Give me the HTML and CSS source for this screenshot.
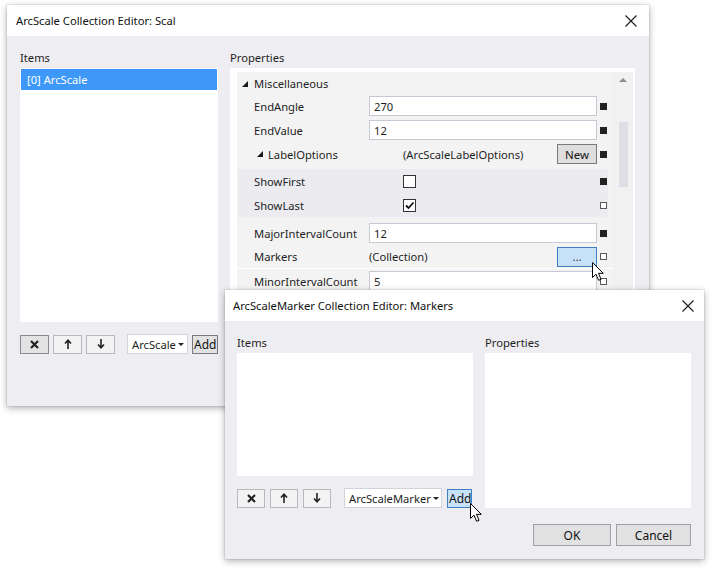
FILE: index.html
```html
<!DOCTYPE html>
<html>
<head>
<meta charset="utf-8">
<link rel="stylesheet" href="styles.css">
</head>
<body>
<div class="desk">
  <section class="win win-main">
    <header class="titlebar">
      <span class="title">ArcScale Collection Editor: Scal</span>
      <svg class="close" width="12" height="12" viewBox="0 0 12 12"><path d="M0.5 0.5 L11.5 11.5 M11.5 0.5 L0.5 11.5" stroke="#1a1a1a" stroke-width="1.1" fill="none"/></svg>
    </header>
    <div class="main-body">
      <div class="col-left">
        <div class="label">Items</div>
        <div class="list list-main"><div class="item sel">[0] ArcScale</div></div>
        <div class="toolbar">
          <button class="tb tb-pressed"><svg width="9" height="9" viewBox="0 0 9 9"><path d="M1 1 L8 8 M8 1 L1 8" stroke="#222" stroke-width="2.2"/></svg></button>
          <button class="tb"><svg width="8" height="10" viewBox="0 0 8 10"><path d="M4 10 V2 M1 4.5 L4 1.2 L7 4.5" stroke="#222" stroke-width="1.6" fill="none"/></svg></button>
          <button class="tb"><svg width="8" height="10" viewBox="0 0 8 10"><path d="M4 0 V8 M1 5.5 L4 8.8 L7 5.5" stroke="#222" stroke-width="1.6" fill="none"/></svg></button>
          <div class="combo combo-main">ArcScale<span class="caret"></span></div>
          <button class="add">Add</button>
        </div>
      </div>
      <div class="col-right">
        <div class="label">Properties</div>
        <div class="pgrid">
          <div class="pcontent">
            <div class="row cat"><span class="tri"><svg width="6" height="6" viewBox="0 0 6 6"><polygon points="6,0 6,6 0,6" fill="#1a1a1a"/></svg></span><span>Miscellaneous</span></div>
            <div class="row"><span class="name">EndAngle</span><span class="val input">270</span><span class="mark on"></span></div>
            <div class="row"><span class="name">EndValue</span><span class="val input">12</span><span class="mark on"></span></div>
            <div class="row"><span class="name wide"><span class="tri sub"><svg width="6" height="6" viewBox="0 0 6 6"><polygon points="6,0 6,6 0,6" fill="#1a1a1a"/></svg></span>LabelOptions</span><span class="val text">(ArcScaleLabelOptions)</span><button class="newbtn">New</button><span class="mark on"></span></div>
            <div class="group">
              <div class="row grow"><span class="name wide">ShowFirst</span><span class="val"><span class="chk"></span></span><span class="mark on"></span></div>
              <div class="row grow"><span class="name wide">ShowLast</span><span class="val"><span class="chk"><svg width="11" height="11" viewBox="0 0 11 11"><path d="M2 5.5 L4.5 8 L9.5 2.5" stroke="#111" stroke-width="1.8" fill="none"/></svg></span></span><span class="mark"></span></div>
            </div>
            <div class="row"><span class="name">MajorIntervalCount</span><span class="val input">12</span><span class="mark on"></span></div>
            <div class="row sep"><span class="name">Markers</span><span class="val text">(Collection)</span><button class="dots">...</button><span class="mark"></span></div>
            <div class="row"><span class="name">MinorIntervalCount</span><span class="val input">5</span><span class="mark"></span></div>
          </div>
          <div class="vscroll">
            <span class="up"></span>
            <span class="thumb"></span>
          </div>
        </div>
      </div>
    </div>
  </section>

  <svg class="cursor cursor-1" width="13" height="20" viewBox="0 0 13 20"><path d="M0.5 0.5 L0.5 15.5 L4 12.2 L6.6 18.3 L9 17.3 L6.5 11.3 L11.3 11.3 Z" fill="#fff" stroke="#000" stroke-width="1"/></svg>

  <section class="win win-sub">
    <header class="titlebar">
      <span class="title">ArcScaleMarker Collection Editor: Markers</span>
      <svg class="close" width="12" height="12" viewBox="0 0 12 12"><path d="M0.5 0.5 L11.5 11.5 M11.5 0.5 L0.5 11.5" stroke="#1a1a1a" stroke-width="1.1" fill="none"/></svg>
    </header>
    <div class="sub-body">
      <div class="col-left2">
        <div class="label">Items</div>
        <div class="list list-sub"></div>
        <div class="toolbar toolbar2">
          <button class="tb tb2"><svg width="9" height="9" viewBox="0 0 9 9"><path d="M1 1 L8 8 M8 1 L1 8" stroke="#222" stroke-width="2.2"/></svg></button>
          <button class="tb tb2"><svg width="8" height="10" viewBox="0 0 8 10"><path d="M4 10 V2 M1 4.5 L4 1.2 L7 4.5" stroke="#222" stroke-width="1.6" fill="none"/></svg></button>
          <button class="tb tb2"><svg width="8" height="10" viewBox="0 0 8 10"><path d="M4 0 V8 M1 5.5 L4 8.8 L7 5.5" stroke="#222" stroke-width="1.6" fill="none"/></svg></button>
          <div class="combo combo-sub">ArcScaleMarker<span class="caret"></span></div>
          <button class="add add-hot">Add</button>
        </div>
      </div>
      <div class="col-right2">
        <div class="label">Properties</div>
        <div class="list list-props"></div>
      </div>
      <div class="footer">
        <button class="dlg ok">OK</button>
        <button class="dlg cancel">Cancel</button>
      </div>
    </div>
  </section>

  <svg class="cursor cursor-2" width="13" height="20" viewBox="0 0 13 20"><path d="M0.5 0.5 L0.5 15.5 L4 12.2 L6.6 18.3 L9 17.3 L6.5 11.3 L11.3 11.3 Z" fill="#fff" stroke="#000" stroke-width="1"/></svg>
</div>
</body>
</html>
```

FILE: styles.css
```css
* { box-sizing: border-box; }
html, body { margin: 0; padding: 0; background: #ffffff; }
body {
  font-family: "Noto Sans", "Segoe UI", "Liberation Sans", sans-serif;
  font-size: 11.2px;
  color: #1e1e1e;
}
.desk { position: relative; width: 717px; height: 574px; overflow: hidden; }

.win {
  position: absolute;
  background: #eeedf2;
  box-shadow: 0 0 0 1px rgba(0,0,0,0.06), 0 2px 7px rgba(0,0,0,0.32);
  display: flex;
  flex-direction: column;
}
.win-main { left: 7px; top: 5px; width: 642px; height: 401px; }
.win-sub { left: 225px; top: 290px; width: 479px; height: 269px; }

.titlebar {
  height: 31px;
  background: #ffffff;
  display: flex;
  align-items: center;
  justify-content: space-between;
  padding: 0 12px 0 9px;
  flex: none;
}
.win-sub .titlebar { padding: 0 10px 0 8px; }
.title { font-size: 11.2px; color: #111; line-height: 16px; }

.main-body {
  display: flex;
  gap: 12px;
  padding: 12px 14px 0 13px;
}
.col-left { width: 198px; display: flex; flex-direction: column; }
.col-right { width: 405px; display: flex; flex-direction: column; }

.label { height: 20px; line-height: 20px; color: #1e1e1e; }

.list { background: #ffffff; }
.list-main { height: 254px; padding: 1px; }
.item { height: 21px; line-height: 22px; padding-left: 6px; }
.item.sel { background: #3d98f8; color: #ffffff; }

.toolbar { display: flex; align-items: center; margin-top: 12px; height: 20px; }
.tb {
  width: 29px; height: 19px;
  border: 1px solid #b9b9b9;
  background: #f3f3f3;
  padding: 0; margin: 0 4px 0 0;
  display: flex; align-items: center; justify-content: center;
}
.tb-pressed { background: #e3e3e3; border-color: #8a8a8a; }
.combo {
  height: 20px;
  background: #ffffff;
  border: 1px solid #d3d3dc;
  display: flex; align-items: center;
  padding-left: 4px;
  color: #1e1e1e;
  white-space: nowrap;
  overflow: hidden;
}
.combo-main { width: 61px; margin-left: 8px; }
.caret {
  width: 0; height: 0;
  border-left: 3px solid transparent;
  border-right: 3px solid transparent;
  border-top: 3px solid #222;
  margin-left: 2px;
  flex: none;
}
.add {
  height: 19px; width: 26px;
  margin-left: 4px;
  padding: 0;
  border: 1px solid #7a7a7a;
  background: #e1e1e1;
  font-family: inherit; font-size: 12px; color: #111;
  overflow: hidden;
  white-space: nowrap;
  text-align: left;
  padding-left: 1px;
}

.pgrid {
  background: #ffffff;
  height: 254px;
  display: flex;
  padding: 4px 2px 0 7px;
}
.pcontent {
  width: 376px;
  background: #f3f3f3;
  display: flex;
  flex-direction: column;
}
.vscroll {
  width: 20px;
  background: #f1f1f2;
  display: flex;
  flex-direction: column;
  align-items: center;
}
.vscroll .up {
  margin-top: 6px;
  width: 0; height: 0;
  border-left: 4px solid transparent;
  border-right: 4px solid transparent;
  border-bottom: 4px solid #8c8c96;
}
.vscroll .thumb {
  margin-top: 40px;
  width: 9px; height: 65px;
  background: #dedee6;
}

.row {
  height: 24px;
  display: flex;
  align-items: center;
  padding: 0 6px 0 17px;
  flex: none;
}
.row.cat { padding-left: 5px; height: 22px; padding-top: 1px; }
.tri { width: 12px; display: inline-flex; align-items: center; }
.tri.sub { width: 14px; padding-left: 3px; }
.name { width: 115px; flex: none; white-space: nowrap; display: flex; align-items: center; }
.name.wide { width: 149px; }
.val { flex: 1; min-width: 0; display: flex; align-items: center; white-space: nowrap; }
.val.input {
  height: 20px;
  background: #ffffff;
  border: 1px solid #c9c9d5;
  padding-left: 4px;
}
.mark {
  width: 7px; height: 7px;
  margin-left: 3px;
  border: 1px solid #5a5a5a;
  background: #ffffff;
  flex: none;
}
.mark.on { background: #222222; border-color: #222222; }

.newbtn {
  width: 40px; height: 20px;
  padding: 0;
  border: 1px solid #7a7a7a;
  background: #dedede;
  font-family: inherit; font-size: 11.5px; color: #111;
}
.dots {
  width: 40px; height: 20px;
  padding: 0;
  border: 1px solid #3d7fc0;
  background: #c7e2f8;
  font-family: inherit; font-size: 11.5px; color: #333; line-height: 12px;
}

.group {
  background: #ebebf0;
  margin: 3px 5px 4px 1px;
}
.row.grow { padding: 0 1px 0 16px; }
.chk {
  width: 13px; height: 13px;
  border: 1px solid #333;
  background: #ffffff;
  display: flex; align-items: center; justify-content: center;
}
.row.sep { border-bottom: 1px solid #ffffff; }

.sub-body {
  display: grid;
  grid-template-columns: 236px 206px;
  column-gap: 12px;
  padding: 12px 13px 0 12px;
}
.col-left2, .col-right2 { display: flex; flex-direction: column; }
.list-sub { height: 123px; }
.list-props { height: 155px; }
.toolbar2 { margin-top: 12px; }
.tb2 { width: 28px; margin-right: 5px; background: #f3f3f3; border-color: #b9b9b9; }
.combo-sub { width: 98px; margin-left: 8px; }
.add-hot { width: 25px; margin-left: 5px; background: #c7e2f8; border-color: #3d7fc0; }

.footer {
  grid-column: 1 / 3;
  display: flex;
  justify-content: flex-end;
  gap: 5px;
  margin-top: 16px;
}
.dlg {
  height: 22px;
  border: 1px solid #a0a0a0;
  background: #e1e1e1;
  font-family: inherit; font-size: 12px; color: #111;
  padding: 0;
}
.ok { width: 78px; }
.cancel { width: 75px; }

.cursor { position: absolute; }
.cursor-1 { left: 592px; top: 262px; }
.cursor-2 { left: 470px; top: 503px; }
```
